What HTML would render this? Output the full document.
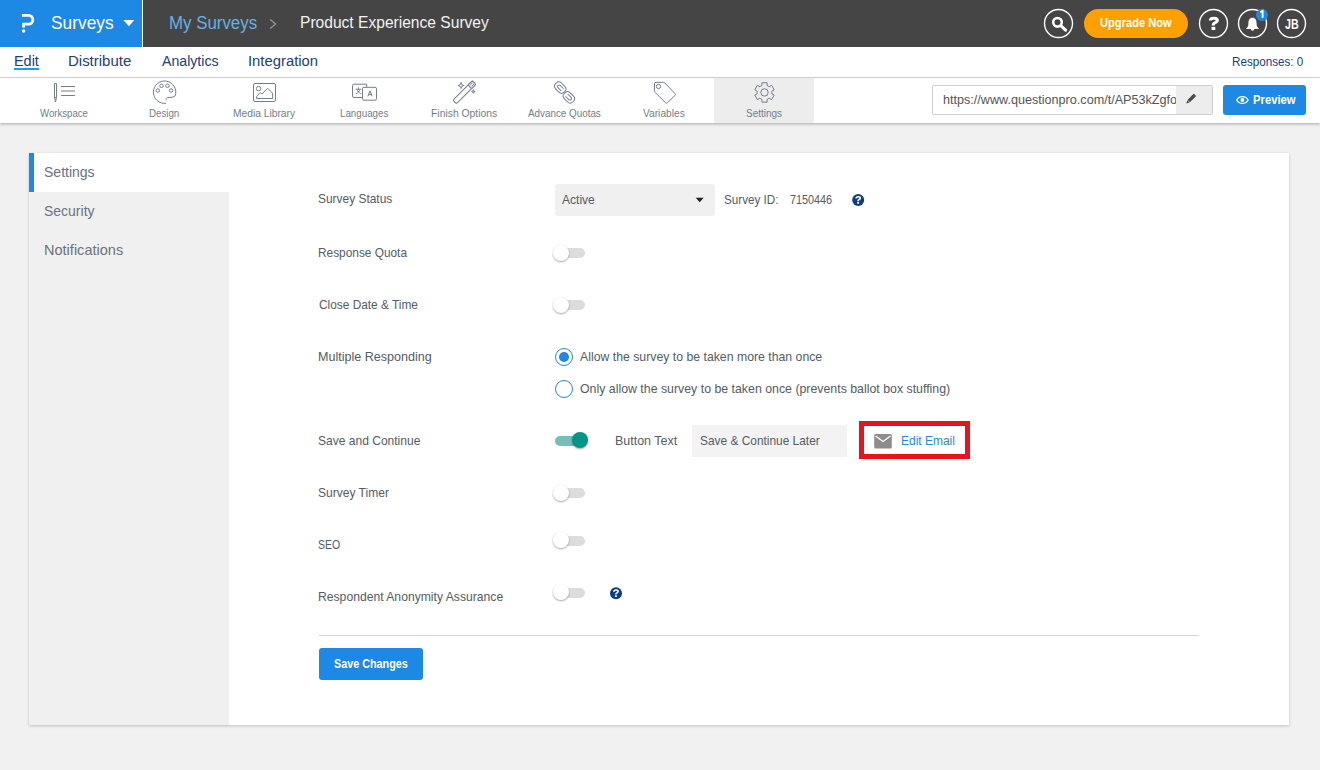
<!DOCTYPE html>
<html><head><meta charset="utf-8"><title>Settings</title>
<style>
*{box-sizing:border-box}
html,body{margin:0;padding:0}
body{width:1320px;height:770px;overflow:hidden;position:relative;background:#f1f1f1;font-family:"Liberation Sans",sans-serif}
.a{position:absolute}
.t{position:absolute;line-height:normal;white-space:nowrap;font-family:"Liberation Sans",sans-serif}
.circ{position:absolute;width:30px;height:30px;border:1.3px solid #fff;border-radius:50%}
.tog{position:absolute;width:30px;height:10px;border-radius:5px;background:#dcdcdc}
.knob{position:absolute;width:16px;height:16px;border-radius:50%;background:#fff;box-shadow:0 1px 2px rgba(0,0,0,.35)}
svg{position:absolute;overflow:visible}
</style></head><body>
<!-- header -->
<div class="a" style="left:0;top:0;width:1320px;height:47px;background:#454545"></div>
<div class="a" style="left:0;top:0;width:142px;height:47px;background:#1e88e5"></div>
<div class="a" style="left:142px;top:0;width:1px;height:47px;background:#fff"></div>
<svg style="left:0;top:0" width="142" height="47"><path d="M21.9 15.3 H28.4 A4.45 4.45 0 0 1 28.4 24.2 H23.6 V27.6" fill="none" stroke="#fff" stroke-width="2.8"/><circle cx="23.6" cy="30.9" r="1.75" fill="#fff"/>
<path d="M123.4 20 H134.4 L128.9 26.2 Z" fill="#fff"/></svg>
<div class="t" style="left:51.49px;top:12px;font-size:19px;font-weight:400;color:#ffffff;transform:scaleX(0.9119);transform-origin:0 0;">Surveys</div>
<div class="t" style="left:168.96px;top:13px;font-size:18px;font-weight:400;color:#68b0e2;transform:scaleX(0.9366);transform-origin:0 0;">My Surveys</div>
<svg style="left:0;top:0" width="300" height="47"><path d="M270.2 19.5 L275.6 24 L270.2 28.5" fill="none" stroke="#9a9a9a" stroke-width="1.2"/></svg>
<div class="t" style="left:300.08px;top:13px;font-size:17px;font-weight:400;color:#f2f2f2;transform:scaleX(0.9166);transform-origin:0 0;">Product Experience Survey</div>

<svg style="left:0;top:0" width="1320" height="47"><circle cx="1057.5" cy="22.3" r="4.3" fill="none" stroke="#fff" stroke-width="2.6"/><path d="M1061 25.8 L1065.6 30.2" stroke="#fff" stroke-width="3" stroke-linecap="round"/></svg>
<div class="a" style="left:1084px;top:9px;width:104px;height:29px;border-radius:15px;background:#ffa000"></div>
<div class="t" style="left:1100.00px;top:15px;font-size:13px;font-weight:700;color:#ffffff;transform:scaleX(0.8560);transform-origin:0 0;">Upgrade Now</div>



<svg style="left:0;top:0" width="1320" height="47"><path d="M1210.3 20.6 C1210.3 18.6 1211.8 18.3 1213.8 18.3 C1216 18.3 1217.4 19.2 1217.4 20.6 C1217.4 22.5 1213.3 22.6 1213.3 24.4 V25.6" fill="none" stroke="#fff" stroke-width="3.1"/><rect x="1211.5" y="26.8" width="3.8" height="3.2" fill="#fff"/></svg>
<svg style="left:0;top:0" width="1320" height="47"><path d="M1252.5 17.8 C1255.6 17.8 1256.6 20.5 1256.6 23.5 C1256.6 26 1257.3 27.3 1259.1 29.1 H1245.9 C1247.7 27.3 1248.4 26 1248.4 23.5 C1248.4 20.5 1249.4 17.8 1252.5 17.8 Z" fill="#fff"/><path d="M1250.8 29 A1.7 1.7 0 0 0 1254.2 29 Z" fill="#fff"/></svg>

<div class="t" style="left:1284.50px;top:15px;font-size:15px;font-weight:700;color:#ffffff;transform:scaleX(0.7105);transform-origin:0 0;">JB</div>
<svg style="left:0;top:0" width="1320" height="47" fill="none" stroke="#fff" stroke-width="1.4"><circle cx="1058.5" cy="23.5" r="14"/><circle cx="1213.5" cy="23.5" r="14"/><circle cx="1252.5" cy="23.5" r="14"/><circle cx="1291.5" cy="23.5" r="14"/></svg>
<div class="a" style="left:1256px;top:9px;width:12px;height:12px;border-radius:50%;background:#1e88e5"></div>
<svg style="left:0;top:0" width="1320" height="47"><path d="M1260.3 12.2 L1262.6 11 V17.8" fill="none" stroke="#fff" stroke-width="1.9"/></svg>
<!-- nav row -->
<div class="a" style="left:0;top:47px;width:1320px;height:30px;background:#fff"></div>
<div class="t" style="left:13.87px;top:53px;font-size:14px;font-weight:400;color:#21407a;transform:scaleX(1.0304);transform-origin:0 0;">Edit</div>
<div class="a" style="left:14px;top:68px;width:25px;height:2px;background:#1ba1e2"></div>
<div class="t" style="left:67.93px;top:53px;font-size:14px;font-weight:400;color:#21407a;transform:scaleX(1.0690);transform-origin:0 0;">Distribute</div>
<div class="t" style="left:161.80px;top:53px;font-size:14px;font-weight:400;color:#21407a;transform:scaleX(1.0089);transform-origin:0 0;">Analytics</div>
<div class="t" style="left:247.94px;top:53px;font-size:14px;font-weight:400;color:#21407a;transform:scaleX(1.0585);transform-origin:0 0;">Integration</div>
<div class="t" style="left:1231.80px;top:54px;font-size:13px;font-weight:400;color:#21407a;transform:scaleX(0.8962);transform-origin:0 0;">Responses: 0</div>
<div class="a" style="left:0;top:77px;width:1320px;height:1px;background:#dcdcdc"></div>
<!-- toolbar -->
<div class="a" style="left:0;top:78px;width:1320px;height:45px;background:#fff;box-shadow:0 1px 3px rgba(0,0,0,.3)"></div>
<div class="a" style="left:714px;top:78px;width:100px;height:45px;background:#ededed"></div>
<div class="t" style="left:39.90px;top:107px;font-size:11px;font-weight:400;color:#737d8b;transform:scaleX(0.8745);transform-origin:0 0;">Workspace</div>
<div class="t" style="left:148.82px;top:107px;font-size:11px;font-weight:400;color:#737d8b;transform:scaleX(0.8818);transform-origin:0 0;">Design</div>
<div class="t" style="left:232.57px;top:107px;font-size:11px;font-weight:400;color:#737d8b;transform:scaleX(0.9318);transform-origin:0 0;">Media Library</div>
<div class="t" style="left:339.61px;top:107px;font-size:11px;font-weight:400;color:#737d8b;transform:scaleX(0.8868);transform-origin:0 0;">Languages</div>
<div class="t" style="left:430.56px;top:107px;font-size:11px;font-weight:400;color:#737d8b;transform:scaleX(0.9420);transform-origin:0 0;">Finish Options</div>
<div class="t" style="left:527.50px;top:107px;font-size:11px;font-weight:400;color:#737d8b;transform:scaleX(0.8951);transform-origin:0 0;">Advance Quotas</div>
<div class="t" style="left:643.25px;top:107px;font-size:11px;font-weight:400;color:#737d8b;transform:scaleX(0.9278);transform-origin:0 0;">Variables</div>
<div class="t" style="left:745.80px;top:107px;font-size:11px;font-weight:400;color:#737d8b;transform:scaleX(0.9050);transform-origin:0 0;">Settings</div>
<svg style="left:0;top:0" width="1320" height="130" fill="none" stroke="#737d8b" stroke-width="1">
 <!-- workspace -->
 <path d="M54.5 83.5 H56.5 V97.5 H54.5 Z M54.5 97.5 L55.5 102 L56.5 97.5"/>
 <path d="M61 86.5 H75 M61 91 H75 M61 95.5 H75" stroke-width="1.1"/>
 <!-- design -->
 <path d="M166 103.3 A11.2 11.2 0 1 1 175.2 95.8 C173.8 97.2 171 97.5 167.7 97.5 C166 97.7 166 99 166.3 100.3"/>
 <circle cx="161.5" cy="85.8" r="1.75"/><circle cx="167.5" cy="85.8" r="1.75"/><circle cx="157.8" cy="90.5" r="1.75"/><circle cx="171.1" cy="90.5" r="1.75"/>
 <!-- media -->
 <rect x="253.5" y="83.5" width="22" height="18" rx="1.5"/>
 <circle cx="258.6" cy="88.6" r="2.2"/>
 <path d="M256.7 98.5 V96.2 L260.3 92.6 L262 94 L267.6 88.3 L272.6 93.2 V98.5 Z"/>
 <!-- languages -->
 <path d="M362.5 97.5 H354 A1.5 1.5 0 0 1 352.5 96 V85.7 A1.5 1.5 0 0 1 354 84.2 H366.7 V87.3"/>
 <rect x="362.5" y="87.3" width="14" height="12.9" rx="1.5"/>
 <path d="M355.6 89.2 H361.3 M358.45 87.5 V89.2 M360 89.2 C359.6 91.5 358 93 355.8 93.8 M356.9 89.2 C357.4 91.3 359 93 361.2 93.8" stroke-width="0.9"/>
 <path d="M367.9 96.3 L370 90.8 L372.1 96.3 M368.6 94.6 H371.4" stroke-width="1"/>
 <!-- finish options -->
 <g transform="translate(464.4 92.2) rotate(-45)"><rect x="-13.8" y="-2.5" width="27.6" height="5" rx="1.6"/><rect x="7.6" y="-2.5" width="6.2" height="5" rx="1.2" fill="#e3e6ea"/><path d="M7.6 -2.5 V2.5 M9.6 -1 H12.3 M9.6 1 H12.3" stroke-width="0.8"/></g>
 <path d="M461 82.3 L461.9 84.6 L464.2 85.5 L461.9 86.4 L461 88.7 L460.1 86.4 L457.8 85.5 L460.1 84.6 Z" stroke-width="0.8" fill="#d5d9de"/>
 <path d="M473.3 89.8 L473.9 91 L475.1 91.6 L473.9 92.2 L473.3 93.4 L472.7 92.2 L471.5 91.6 L472.7 91 Z" stroke-width="0.8" fill="#a9b0ba"/>
 <!-- advance quotas -->
 <g transform="translate(560.2 87.6) rotate(45)"><rect x="-6" y="-4.1" width="12" height="8.2" rx="3.6"/><path d="M3.2 -1.6 H-1.5 A1.6 1.6 0 0 0 -3.1 0 A1.6 1.6 0 0 0 -1.5 1.6 H3.2"/></g>
 <g transform="translate(568.9 97.4) rotate(45)"><rect x="-6" y="-4.1" width="12" height="8.2" rx="3.6"/><path d="M-3.2 -1.6 H1.5 A1.6 1.6 0 0 1 3.1 0 A1.6 1.6 0 0 1 1.5 1.6 H-3.2"/></g>
 <!-- variables -->
 <path d="M656 82.3 H663.3 Q664.2 82.3 664.9 83 L675 93.5 Q675.8 94.5 675 95.4 L667.4 102.8 Q666.5 103.6 665.6 102.8 L655.3 92.6 Q654.5 91.8 654.5 90.8 V83.8 Q654.5 82.3 656 82.3 Z"/>
 <circle cx="658.5" cy="86.5" r="2.1"/>
 <!-- settings gear -->
 <path d="M761.90 85.52 L761.90 82.75 L767.10 82.75 L767.10 85.52 A7.4 7.4 0 0 1 769.20 86.73 L771.60 85.35 L774.20 89.85 L771.80 91.24 A7.4 7.4 0 0 1 771.80 93.66 L774.20 95.05 L771.60 99.55 L769.20 98.17 A7.4 7.4 0 0 1 767.10 99.38 L767.10 102.15 L761.90 102.15 L761.90 99.38 A7.4 7.4 0 0 1 759.80 98.17 L757.40 99.55 L754.80 95.05 L757.20 93.66 A7.4 7.4 0 0 1 757.20 91.24 L754.80 89.85 L757.40 85.35 L759.80 86.73 A7.4 7.4 0 0 1 761.90 85.52 Z" stroke-linejoin="round"/>
 <circle cx="764.5" cy="92.45" r="3.7"/>
</svg>
<!-- url box -->
<div class="a" style="left:932px;top:85px;width:281px;height:30px;border:1px solid #cfcfcf;border-radius:2px;background:#fff;overflow:hidden">
 <div class="a" style="left:243px;top:0;width:36px;height:28px;background:#ededed"></div>
</div>
<div class="a" style="left:933px;top:86px;width:243px;height:28px;overflow:hidden">
 <div style="position:absolute;left:-933px;top:-86px;width:1320px;height:200px"><div class="t" style="left:943.33px;top:92px;font-size:13px;font-weight:400;color:#555555;transform:scaleX(0.9696);transform-origin:0 0;">https://www.questionpro.com/t/AP53kZgfo</div></div>
</div>
<svg style="left:0;top:0" width="1320" height="130"><g transform="translate(1191 98.8) rotate(45)"><rect x="-1.7" y="-5.6" width="3.4" height="8.8" rx="0.6" fill="#4a4a4a"/><path d="M-1.7 3.6 L0 6.6 L1.7 3.6 Z" fill="#4a4a4a"/></g></svg>
<div class="a" style="left:1223px;top:85px;width:83px;height:30px;border-radius:3px;background:#1e88e5"></div>
<svg style="left:0;top:0" width="1320" height="130"><path d="M1236.7 100 C1239 95.4 1245.8 95.4 1248.1 100 C1245.8 104.6 1239 104.6 1236.7 100 Z" fill="none" stroke="#fff" stroke-width="1.3"/><circle cx="1242.4" cy="100" r="1.9" fill="#fff"/></svg>
<div class="t" style="left:1252.73px;top:92px;font-size:13px;font-weight:700;color:#ffffff;transform:scaleX(0.8667);transform-origin:0 0;">Preview</div>
<!-- card -->
<div class="a" style="left:29px;top:153px;width:1260px;height:572px;background:#fff;box-shadow:0 1px 3px rgba(0,0,0,.2)"></div>
<div class="a" style="left:29px;top:192px;width:200px;height:533px;background:#f0f0f0"></div>
<div class="a" style="left:29px;top:153px;width:5px;height:39px;background:#1e88e5"></div>
<div class="t" style="left:43.57px;top:163px;font-size:15px;font-weight:400;color:#6b7280;transform:scaleX(0.9340);transform-origin:0 0;">Settings</div>
<div class="t" style="left:43.77px;top:202px;font-size:15px;font-weight:400;color:#6b7280;transform:scaleX(0.9321);transform-origin:0 0;">Security</div>
<div class="t" style="left:43.73px;top:241px;font-size:15px;font-weight:400;color:#6b7280;transform:scaleX(0.9691);transform-origin:0 0;">Notifications</div>
<div class="t" style="left:318.28px;top:191px;font-size:13px;font-weight:400;color:#535c67;transform:scaleX(0.9175);transform-origin:0 0;">Survey Status</div>
<div class="t" style="left:318.09px;top:245px;font-size:13px;font-weight:400;color:#535c67;transform:scaleX(0.9124);transform-origin:0 0;">Response Quota</div>
<div class="t" style="left:319.00px;top:297px;font-size:13px;font-weight:400;color:#535c67;transform:scaleX(0.9130);transform-origin:0 0;">Close Date &amp; Time</div>
<div class="t" style="left:318.04px;top:349px;font-size:13px;font-weight:400;color:#535c67;transform:scaleX(0.9647);transform-origin:0 0;">Multiple Responding</div>
<div class="t" style="left:318.07px;top:433px;font-size:13px;font-weight:400;color:#535c67;transform:scaleX(0.9257);transform-origin:0 0;">Save and Continue</div>
<div class="t" style="left:318.07px;top:485px;font-size:13px;font-weight:400;color:#535c67;transform:scaleX(0.9263);transform-origin:0 0;">Survey Timer</div>
<div class="t" style="left:318.19px;top:537px;font-size:13px;font-weight:400;color:#535c67;transform:scaleX(0.8077);transform-origin:0 0;">SEO</div>
<div class="t" style="left:318.06px;top:589px;font-size:13px;font-weight:400;color:#535c67;transform:scaleX(0.9350);transform-origin:0 0;">Respondent Anonymity Assurance</div>
<div class="a" style="left:555px;top:184px;width:160px;height:32px;border-radius:3px;background:#f0f0f0"></div>
<div class="t" style="left:562.00px;top:192px;font-size:13px;font-weight:400;color:#535c67;transform:scaleX(0.9257);transform-origin:0 0;">Active</div>
<svg style="left:0;top:0" width="1320" height="770"><path d="M695.7 197.8 H703.7 L699.7 202.3 Z" fill="#222"/></svg>
<div class="t" style="left:724.40px;top:192px;font-size:13px;font-weight:400;color:#535c67;transform:scaleX(0.8983);transform-origin:0 0;">Survey ID:</div>
<div class="t" style="left:790.40px;top:192px;font-size:13px;font-weight:400;color:#535c67;transform:scaleX(0.8320);transform-origin:0 0;">7150446</div>
<svg style="left:0;top:0" width="1320" height="770">
 <circle cx="858.2" cy="200" r="6" fill="#0d3c8a"/>
 <circle cx="616" cy="593.3" r="6" fill="#0d3c8a"/>
</svg>
<svg style="left:0;top:0" width="1320" height="770"><g transform="translate(858.2 200)"><path d="M-2.1 -1.6 C-2.1 -3 -1.1 -3.3 0 -3.3 C1.3 -3.3 2.1 -2.7 2.1 -1.7 C2.1 -0.5 -0.1 -0.4 -0.1 0.8 V1.2" fill="none" stroke="#fff" stroke-width="1.6"/><rect x="-1.05" y="2" width="1.9" height="1.7" fill="#fff"/></g></svg>
<svg style="left:0;top:0" width="1320" height="770"><g transform="translate(616 593.3)"><path d="M-2.1 -1.6 C-2.1 -3 -1.1 -3.3 0 -3.3 C1.3 -3.3 2.1 -2.7 2.1 -1.7 C2.1 -0.5 -0.1 -0.4 -0.1 0.8 V1.2" fill="none" stroke="#fff" stroke-width="1.6"/><rect x="-1.05" y="2" width="1.9" height="1.7" fill="#fff"/></g></svg>
<!-- toggles -->
<div class="tog" style="left:555px;top:248px"></div><div class="knob" style="left:552.5px;top:244.5px"></div>
<div class="tog" style="left:555px;top:300px"></div><div class="knob" style="left:552.5px;top:296.5px"></div>
<div class="tog" style="left:555px;top:436px;background:#73c0b8"></div><div class="knob" style="left:571.5px;top:432px;background:#009688"></div>
<div class="tog" style="left:555px;top:488px"></div><div class="knob" style="left:552.5px;top:484.5px"></div>
<div class="tog" style="left:555px;top:536px"></div><div class="knob" style="left:552.5px;top:532px"></div>
<div class="tog" style="left:555px;top:588px"></div><div class="knob" style="left:552.5px;top:584px"></div>
<!-- radios -->
<div class="a" style="left:555px;top:348px;width:18px;height:18px;border-radius:50%;border:1.5px solid #1e88e5"></div>
<div class="a" style="left:559px;top:352px;width:10px;height:10px;border-radius:50%;background:#1e88e5"></div>
<div class="a" style="left:555px;top:380px;width:18px;height:18px;border-radius:50%;border:1.5px solid #1e88e5"></div>
<div class="t" style="left:580.30px;top:349px;font-size:13px;font-weight:400;color:#535c67;transform:scaleX(0.9441);transform-origin:0 0;">Allow the survey to be taken more than once</div>
<div class="t" style="left:580.30px;top:381px;font-size:13px;font-weight:400;color:#535c67;transform:scaleX(0.9492);transform-origin:0 0;">Only allow the survey to be taken once (prevents ballot box stuffing)</div>
<div class="t" style="left:614.64px;top:433px;font-size:13px;font-weight:400;color:#535c67;transform:scaleX(0.9594);transform-origin:0 0;">Button Text</div>
<div class="a" style="left:692px;top:425px;width:155px;height:32px;background:#f3f3f3"></div>
<div class="t" style="left:699.58px;top:433px;font-size:13px;font-weight:400;color:#535c67;transform:scaleX(0.9154);transform-origin:0 0;">Save &amp; Continue Later</div>
<div class="a" style="left:859px;top:421px;width:111px;height:38px;border:5px solid #e8141d"></div>
<svg style="left:0;top:0" width="1320" height="770"><rect x="874.2" y="434.1" width="17.6" height="14.4" rx="1.5" fill="#8c8c8c"/><path d="M875.5 436 L883 441.5 L890.5 436" fill="none" stroke="#fff" stroke-width="1.3"/></svg>
<div class="t" style="left:901.38px;top:433px;font-size:13px;font-weight:400;color:#1e88e5;transform:scaleX(0.9211);transform-origin:0 0;">Edit Email</div>
<div class="a" style="left:319px;top:635px;width:880px;height:1px;background:#d5d5d5"></div>
<div class="a" style="left:319px;top:648px;width:104px;height:32px;border-radius:3px;background:#1e88e5"></div>
<div class="t" style="left:334.10px;top:656px;font-size:13px;font-weight:700;color:#ffffff;transform:scaleX(0.8303);transform-origin:0 0;">Save Changes</div>
</body></html>
